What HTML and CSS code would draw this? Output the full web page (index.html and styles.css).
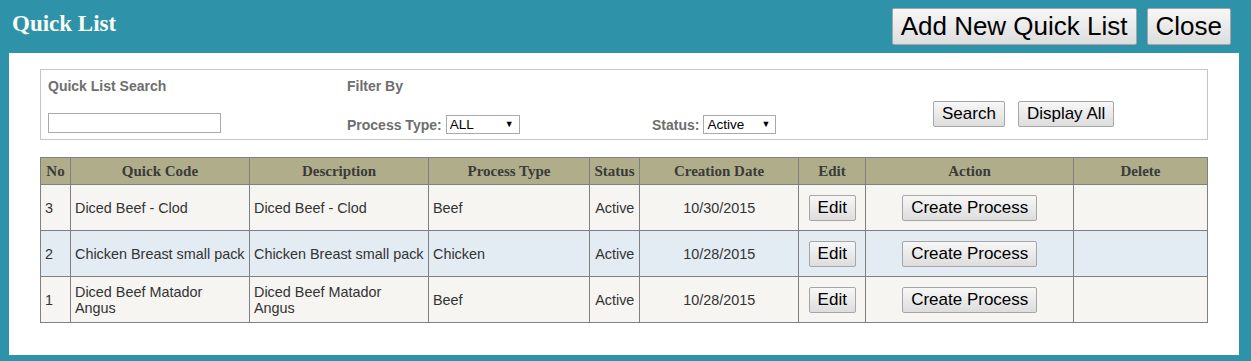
FILE: index.html
```html
<!DOCTYPE html>
<html lang="en">
<head>
    <meta charset="UTF-8">
    <meta name="viewport" content="width=device-width, initial-scale=1.0">
    <title>Quick List</title>
    <link rel="stylesheet" href="styles.css">
</head>
<body>
    <div class="topbar">
        <h1 class="title">Quick List</h1>
        <div class="top-actions">
            <button class="btn btn-big">Add New Quick List</button>
            <button class="btn btn-big">Close</button>
        </div>
    </div>

    <div class="panel">
        <div class="search-box">
            <div class="col col-search">
                <label class="lbl">Quick List Search</label>
                <input type="text" class="txt">
            </div>
            <div class="col col-filter">
                <label class="lbl">Filter By</label>
                <div class="field">
                    <span class="lbl">Process Type:</span>
                    <span class="select-wrap">
                        <select class="sel sel-type">
                            <option>ALL</option>
                            <option>Beef</option>
                            <option>Chicken</option>
                        </select>
                    </span>
                </div>
            </div>
            <div class="col col-status">
                <div class="field">
                    <span class="lbl">Status:</span>
                    <span class="select-wrap">
                        <select class="sel sel-status">
                            <option>Active</option>
                            <option>Inactive</option>
                        </select>
                    </span>
                </div>
            </div>
            <div class="col col-buttons">
                <button class="btn">Search</button>
                <button class="btn">Display All</button>
            </div>
        </div>

        <table class="grid">
            <colgroup>
                <col style="width:30px">
                <col style="width:179px">
                <col style="width:179px">
                <col style="width:161px">
                <col style="width:50px">
                <col style="width:159px">
                <col style="width:67px">
                <col style="width:208px">
                <col>
            </colgroup>
            <tr>
                <th>No</th>
                <th>Quick Code</th>
                <th>Description</th>
                <th>Process Type</th>
                <th>Status</th>
                <th>Creation Date</th>
                <th>Edit</th>
                <th>Action</th>
                <th>Delete</th>
            </tr>
            <tr>
                <td>3</td>
                <td>Diced Beef - Clod</td>
                <td>Diced Beef - Clod</td>
                <td>Beef</td>
                <td class="center">Active</td>
                <td class="center">10/30/2015</td>
                <td class="center"><button class="btn">Edit</button></td>
                <td class="center"><button class="btn">Create Process</button></td>
                <td></td>
            </tr>
            <tr>
                <td>2</td>
                <td>Chicken Breast small pack</td>
                <td>Chicken Breast small pack</td>
                <td>Chicken</td>
                <td class="center">Active</td>
                <td class="center">10/28/2015</td>
                <td class="center"><button class="btn">Edit</button></td>
                <td class="center"><button class="btn">Create Process</button></td>
                <td></td>
            </tr>
            <tr>
                <td>1</td>
                <td>Diced Beef Matador Angus</td>
                <td>Diced Beef Matador Angus</td>
                <td>Beef</td>
                <td class="center">Active</td>
                <td class="center">10/28/2015</td>
                <td class="center"><button class="btn">Edit</button></td>
                <td class="center"><button class="btn">Create Process</button></td>
                <td></td>
            </tr>
        </table>
    </div>
</body>
</html>
```

FILE: styles.css
```css
body {
    margin: 0;
    background-color: #2e93a8;
    font-family: "Liberation Sans", Arial, sans-serif;
}

.topbar {
    display: flex;
    justify-content: space-between;
    align-items: flex-start;
    height: 53px;
    padding: 0 20px 0 12px;
}
.title {
    margin: 0;
    padding-top: 12px;
    font-family: "Liberation Serif", "Times New Roman", serif;
    font-size: 23px;
    line-height: 24px;
    font-weight: bold;
    color: #fbfbf4;
}
.top-actions {
    display: flex;
    gap: 10px;
    padding-top: 8px;
}

.btn {
    font-family: "Liberation Sans", Arial, sans-serif;
    font-size: 17px;
    height: 26px;
    padding: 0 8px;
    color: #000;
    background: linear-gradient(#f7f7f7, #dddddd);
    border: 1px solid #a6a6a6;
    border-radius: 2px;
    cursor: pointer;
}
.btn-big {
    font-size: 26px;
    height: 37px;
    padding: 0 8px;
}

.panel {
    margin: 0 12px 0 9px;
    padding: 16px 31px 33px;
    background-color: #ffffff;
    height: 302px;
    box-sizing: border-box;
}

.search-box {
    display: flex;
    height: 71px;
    box-sizing: border-box;
    border: 1px solid #c6c6c6;
    padding: 8px 0 0 7px;
}
.col {
    display: flex;
    flex-direction: column;
}
.col-search { width: 299px; }
.col-filter { width: 305px; }
.col-status { width: 281px; }
.lbl {
    font-size: 14px;
    line-height: 16px;
    font-weight: bold;
    color: #6e6e6e;
}
.txt {
    margin-top: 19px;
    width: 173px;
    height: 20px;
    box-sizing: border-box;
    border: 1px solid #a9a9a9;
    padding: 0 3px;
}
.field {
    display: flex;
    align-items: center;
    gap: 4px;
    margin-top: 21px;
}
.col-status .field {
    margin-top: 37px;
}
.select-wrap {
    position: relative;
    display: inline-block;
}
.select-wrap::after {
    content: "\25BC";
    position: absolute;
    right: 6px;
    top: 4px;
    font-size: 9px;
    color: #000;
    pointer-events: none;
}
.sel {
    appearance: none;
    -webkit-appearance: none;
    height: 19px;
    box-sizing: border-box;
    border: 1px solid #a9a9a9;
    background: #fff;
    font-family: "Liberation Sans", Arial, sans-serif;
    font-size: 13.5px;
    padding: 0 3px;
    color: #000;
    border-radius: 0;
}
.sel-type { width: 74px; }
.sel-status { width: 73px; }
.col-buttons {
    flex-direction: row;
    gap: 13px;
    padding-top: 23px;
}

.grid {
    margin-top: 17px;
    width: 100%;
    table-layout: fixed;
    border-collapse: collapse;
    border: 1px solid #808080;
}
.grid th {
    height: 26px;
    padding: 0;
    background-color: #b0ae8a;
    border: 1px solid #808080;
    font-family: "Liberation Serif", "Times New Roman", serif;
    font-size: 15px;
    font-weight: bold;
    color: #3a3a3a;
    text-align: center;
}
.grid td {
    height: 45px;
    padding: 0 3.5px 0 4px;
    border: 1px solid #808080;
    font-size: 14.4px;
    line-height: 16px;
    color: #333;
    background-color: #f6f5f1;
}
.grid tr:nth-child(odd) td {
    background-color: #e2ecf2;
}
.grid td.center {
    text-align: center;
}
```
